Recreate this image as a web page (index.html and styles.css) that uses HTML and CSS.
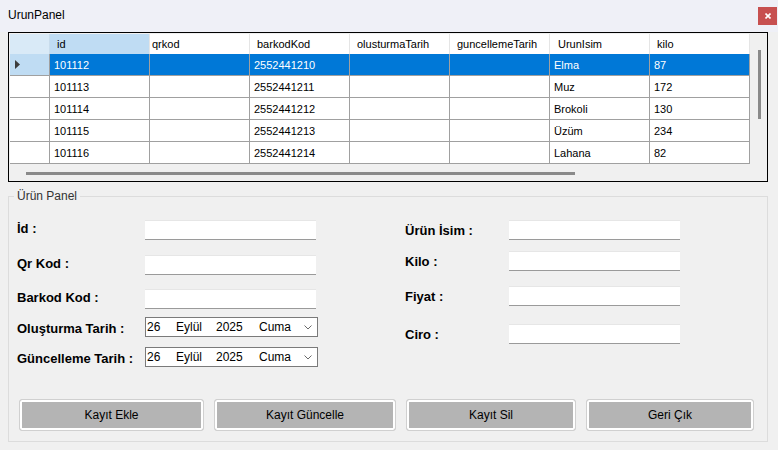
FILE: index.html
```html
<!DOCTYPE html>
<html lang="tr">
<head>
<meta charset="utf-8">
<title>UrunPanel</title>
<link rel="stylesheet" href="styles.css">
</head>
<body>
<div class="window">
  <div class="titlebar">
    <span class="title">UrunPanel</span>
    <button class="close" aria-label="Kapat">
      <svg width="6" height="6" viewBox="0 0 6 6"><path d="M0.5 0.5 L5.5 5.5 M5.5 0.5 L0.5 5.5" stroke="#fff" stroke-width="1.6" fill="none"/></svg>
    </button>
  </div>
  <div class="content">
    <div class="grid">
      <div class="table-col">
        <div class="table">
          <div class="row head">
            <div class="cell rh corner"></div>
            <div class="cell hc sel">id</div>
            <div class="cell hc tight">qrkod</div>
            <div class="cell hc">barkodKod</div>
            <div class="cell hc">olusturmaTarih</div>
            <div class="cell hc">guncellemeTarih</div>
            <div class="cell hc wide">UrunIsim</div>
            <div class="cell hc">kilo</div>
          </div>
          <div class="row selected">
            <div class="cell rh cur"><svg width="5" height="9" viewBox="0 0 5 9"><polygon points="0,0 5,4.5 0,9" fill="#3c3c3c"/></svg></div>
            <div class="cell">101112</div><div class="cell"></div><div class="cell">2552441210</div><div class="cell"></div><div class="cell"></div><div class="cell">Elma</div><div class="cell">87</div>
          </div>
          <div class="row">
            <div class="cell rh"></div>
            <div class="cell">101113</div><div class="cell"></div><div class="cell">2552441211</div><div class="cell"></div><div class="cell"></div><div class="cell">Muz</div><div class="cell">172</div>
          </div>
          <div class="row">
            <div class="cell rh"></div>
            <div class="cell">101114</div><div class="cell"></div><div class="cell">2552441212</div><div class="cell"></div><div class="cell"></div><div class="cell">Brokoli</div><div class="cell">130</div>
          </div>
          <div class="row">
            <div class="cell rh"></div>
            <div class="cell">101115</div><div class="cell"></div><div class="cell">2552441213</div><div class="cell"></div><div class="cell"></div><div class="cell">Üzüm</div><div class="cell">234</div>
          </div>
          <div class="row">
            <div class="cell rh"></div>
            <div class="cell">101116</div><div class="cell"></div><div class="cell">2552441214</div><div class="cell"></div><div class="cell"></div><div class="cell">Lahana</div><div class="cell">82</div>
          </div>
        </div>
        <div class="hscroll"><div class="hthumb"></div></div>
      </div>
      <div class="vscroll"><div class="vthumb"></div></div>
    </div>

    <div class="group">
      <span class="legend">Ürün Panel</span>
      <div class="form">
        <div class="col left">
          <div class="field up"><label>İd :</label><div class="tb"></div></div>
          <div class="field up l2"><label>Qr Kod :</label><div class="tb"></div></div>
          <div class="field up l3"><label>Barkod Kod :</label><div class="tb"></div></div>
          <div class="field down l4"><label>Oluşturma Tarih :</label>
            <div class="dtp"><span class="d1">26</span><span class="d2">Eylül</span><span class="d3">2025</span><span>Cuma</span>
              <svg class="chev" width="8" height="5" viewBox="0 0 8 5"><polyline points="0.5,0.5 4,4 7.5,0.5" fill="none" stroke="#6a6a6a" stroke-width="1"/></svg></div>
          </div>
          <div class="field down l5"><label>Güncelleme Tarih :</label>
            <div class="dtp"><span class="d1">26</span><span class="d2">Eylül</span><span class="d3">2025</span><span>Cuma</span>
              <svg class="chev" width="8" height="5" viewBox="0 0 8 5"><polyline points="0.5,0.5 4,4 7.5,0.5" fill="none" stroke="#6a6a6a" stroke-width="1"/></svg></div>
          </div>
        </div>
        <div class="col right">
          <div class="field"><label>Ürün İsim :</label><div class="tb"></div></div>
          <div class="field r2"><label>Kilo :</label><div class="tb"></div></div>
          <div class="field r3"><label>Fiyat :</label><div class="tb"></div></div>
          <div class="field r4"><label>Ciro :</label><div class="tb"></div></div>
        </div>
      </div>
      <div class="buttons">
        <button class="btn b1">Kayıt Ekle</button>
        <button class="btn b2">Kayıt Güncelle</button>
        <button class="btn b3">Kayıt Sil</button>
        <button class="btn b4">Geri Çık</button>
      </div>
    </div>
  </div>
</div>
</body>
</html>
```
FILE: styles.css
```css
body {
  margin: 0;
  font-family: "Liberation Sans", Arial, sans-serif;
  color: #000;
}
.window {
  width: 778px;
  height: 450px;
  background: #f0f0f0;
  overflow: hidden;
}
.titlebar {
  height: 32px;
  background: #eff0f7;
  display: flex;
  justify-content: space-between;
  align-items: flex-start;
}
.title {
  font-size: 12px;
  line-height: 14px;
  margin: 8px 0 0 8px;
}
.close {
  width: 19px;
  height: 18px;
  margin: 7px 1px 0 0;
  padding: 0;
  border: 0;
  background: #c75050;
  display: flex;
  align-items: center;
  justify-content: center;
}
.content {
  padding-left: 8px;
}
.grid {
  width: 760px;
  height: 150px;
  box-sizing: border-box;
  border: 1px solid #000;
  padding: 1px 0 0 1px;
  display: flex;
  background: #f0f0f0;
}
.table-col {
  width: 740px;
  display: flex;
  flex-direction: column;
}
.row {
  display: grid;
  grid-template-columns: 40px repeat(7, 100px);
  height: 22px;
}
.row.head {
  height: 20px;
}
.cell {
  box-sizing: border-box;
  border-right: 1px solid #a0a0a0;
  border-bottom: 1px solid #a0a0a0;
  background: #fff;
  font-size: 11px;
  padding-left: 4px;
  display: flex;
  align-items: center;
  white-space: nowrap;
  overflow: hidden;
}
.head .cell {
  border-bottom: 0;
  border-right: 1px solid #e5e5e5;
  padding-left: 7px;
}
.head .tight {
  padding-left: 2px;
}
.head .wide {
  padding-left: 8px;
}
.head .corner {
  background: #d9eaf7;
  border-right-color: #c8dcec;
}
.head .sel {
  background: #bfdcf3;
}
.rh {
  padding-left: 0;
}
.cur {
  padding-left: 5px;
  background: #bfdcf3;
}
.selected .cell:not(.rh) {
  background: #0078d7;
  color: #fff;
}
.hscroll {
  height: 17px;
}
.hthumb {
  margin: 8px 0 0 16px;
  width: 549px;
  height: 3px;
  background: #8a8a8a;
}
.vscroll {
  width: 17px;
}
.vthumb {
  margin: 16px 0 0 8px;
  width: 3px;
  height: 69px;
  background: #8a8a8a;
}
.group {
  position: relative;
  margin-top: 14px;
  width: 760px;
  height: 246px;
  box-sizing: border-box;
  border: 1px solid #dcdcdc;
  padding: 23px 0 0 8px;
}
.legend {
  position: absolute;
  left: 5px;
  top: -8px;
  padding: 0 3px;
  background: #f0f0f0;
  font-size: 12px;
  line-height: 14px;
  color: #333;
}
.form {
  display: flex;
}
.col.left {
  width: 301px;
}
.col.right {
  margin-left: 87px;
}
.field {
  display: flex;
  align-items: center;
  height: 20px;
}
.field label {
  font-size: 13px;
  font-weight: bold;
  white-space: nowrap;
}
.field.up label {
  padding-bottom: 3px;
}
.field.down label {
  padding-top: 3px;
}
.left label {
  width: 128px;
}
.right label {
  width: 104px;
}
.l2 { margin-top: 15px; }
.l3 { margin-top: 14px; }
.l4 { margin-top: 8px; }
.l5 { margin-top: 10px; }
.r2 { margin-top: 11px; }
.r3 { margin-top: 15px; }
.r4 { margin-top: 18px; }
.tb {
  width: 171px;
  height: 20px;
  box-sizing: border-box;
  background: #fff;
  border-top: 1px solid #e6e6e6;
  border-bottom: 1px solid #9a9a9a;
}
.dtp {
  width: 173px;
  height: 20px;
  box-sizing: border-box;
  border: 1px solid #7a7a7a;
  background: #fff;
  display: flex;
  align-items: center;
  font-size: 12px;
  padding-left: 1px;
}
.d1 { width: 29px; }
.d2 { width: 40px; }
.d3 { width: 43px; }
.chev {
  margin-left: auto;
  margin-right: 5px;
}
.buttons {
  display: flex;
  gap: 10px;
  margin: 32px 0 0 2px;
}
.btn {
  height: 32px;
  box-sizing: border-box;
  border: 1px solid #d0d0d0;
  border-radius: 3px;
  background: #b4b4b4;
  box-shadow: inset 0 0 0 2px #fff;
  font-family: "Liberation Sans", Arial, sans-serif;
  font-size: 12px;
  color: #000;
  padding: 0;
}
.b1 { width: 185px; }
.b2 { width: 182px; }
.b3 { width: 170px; }
.b4 { width: 168px; }
```
